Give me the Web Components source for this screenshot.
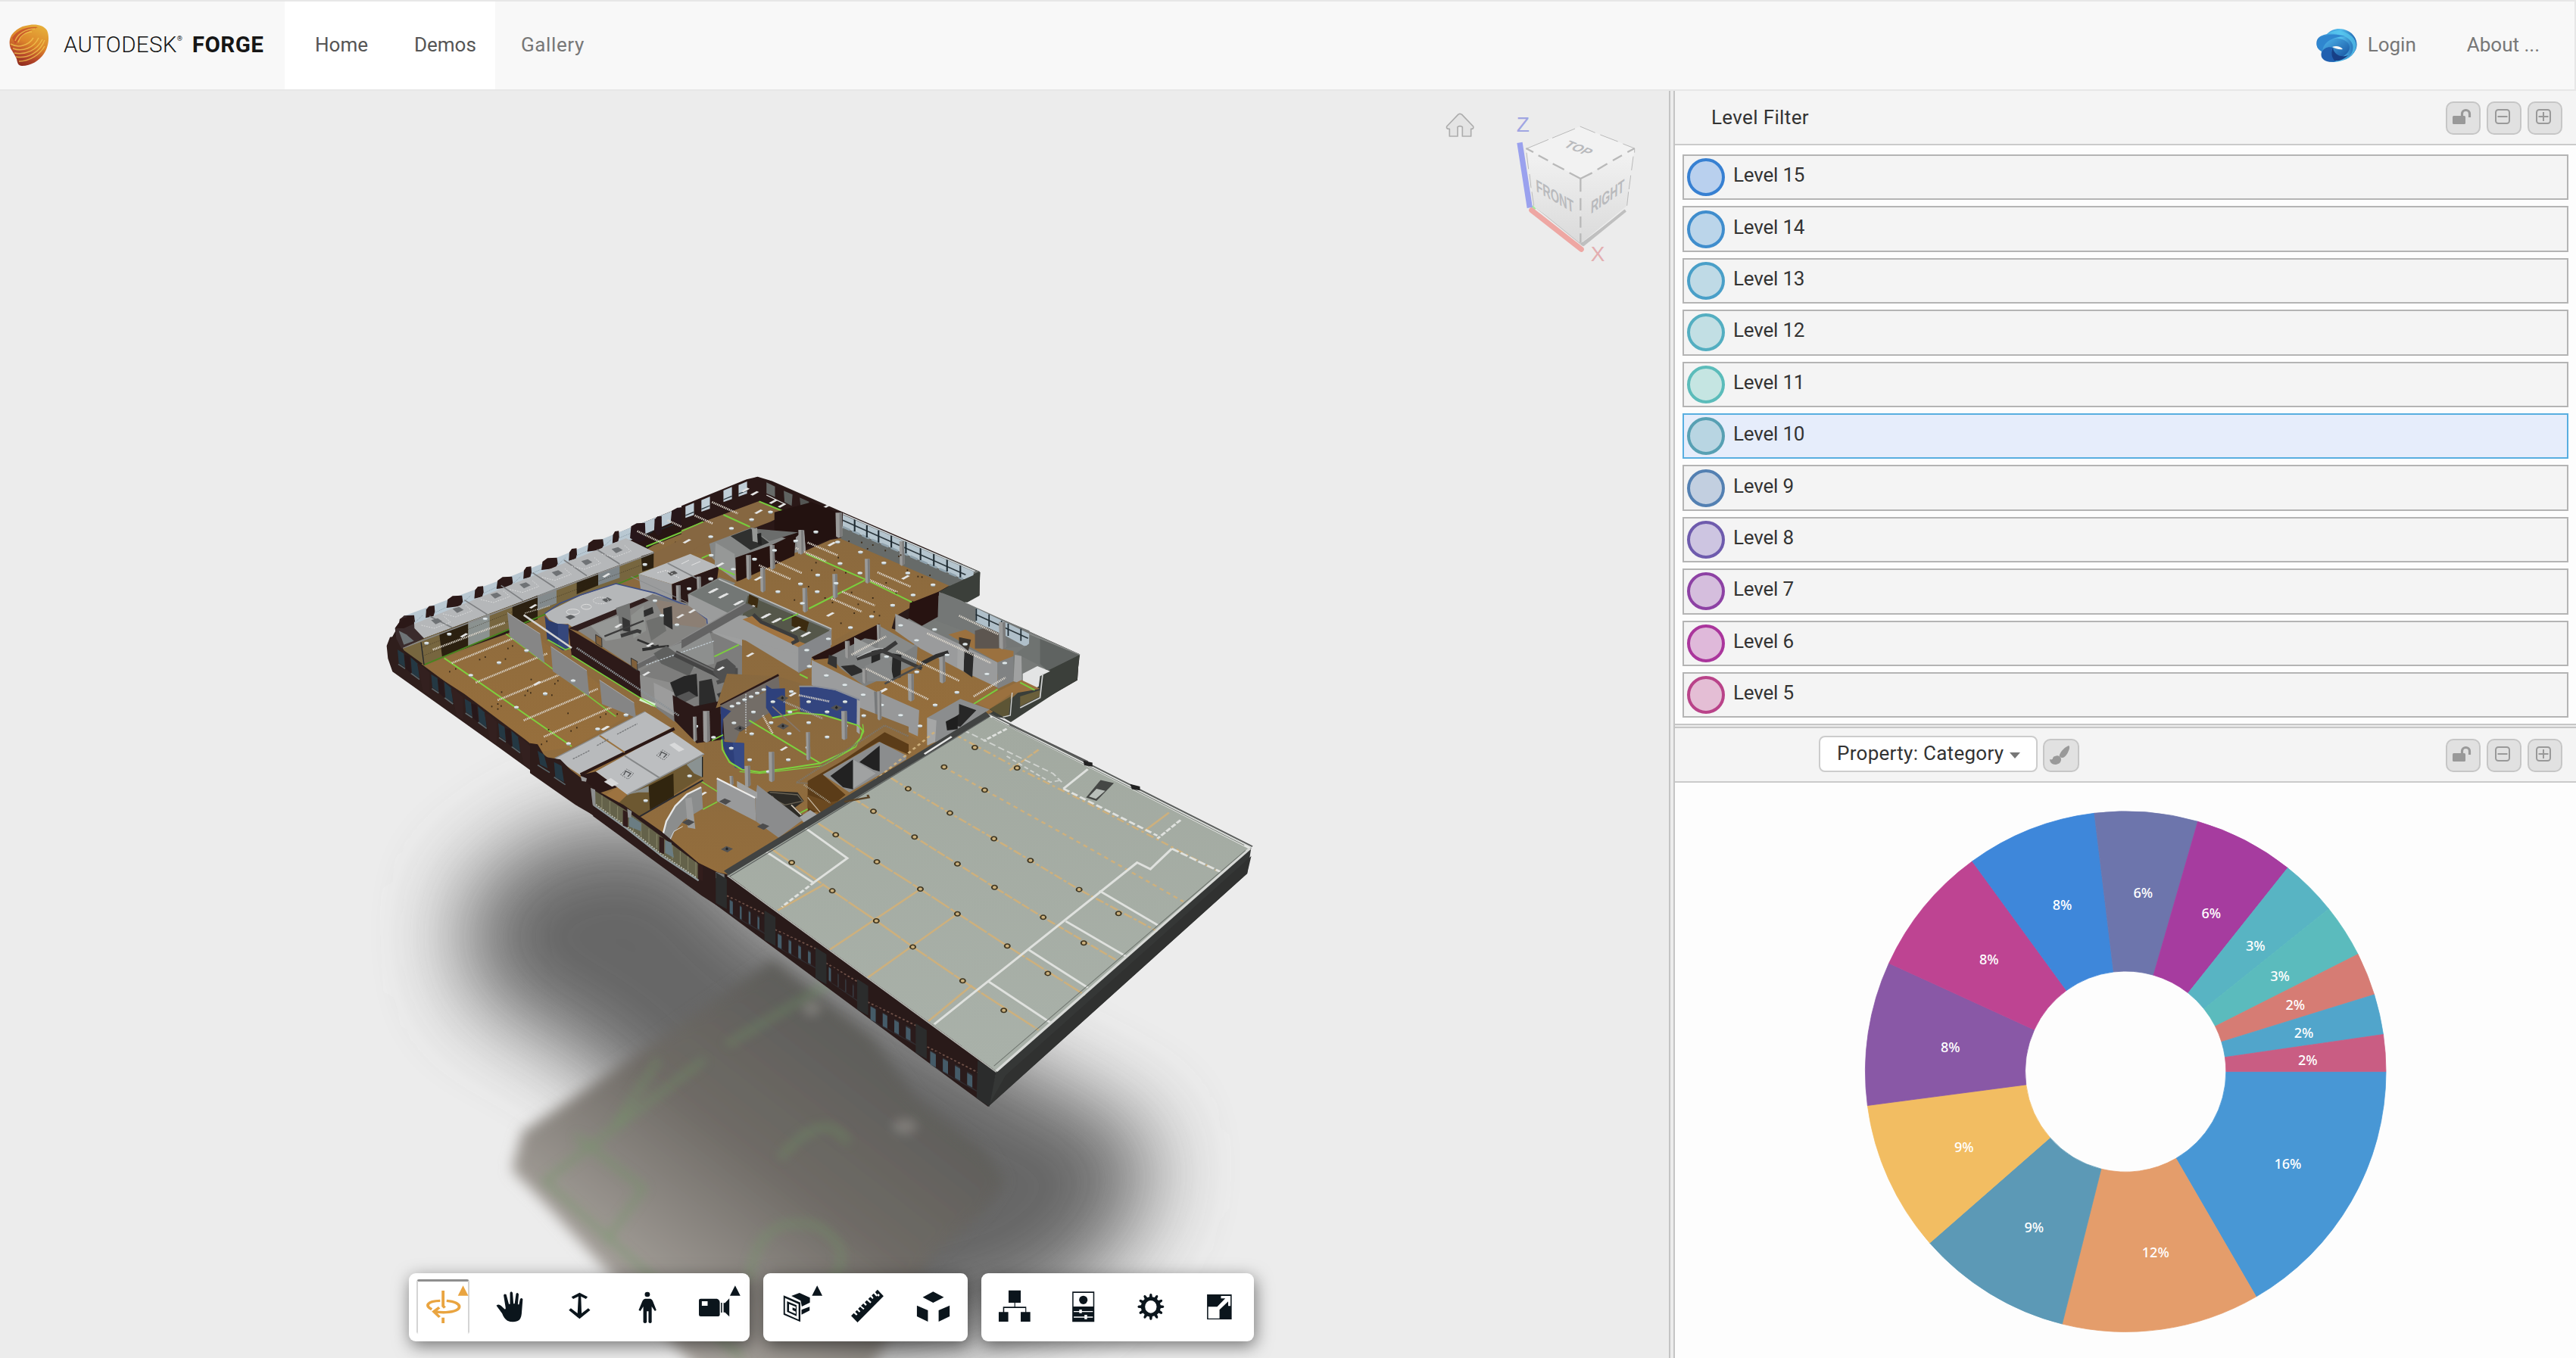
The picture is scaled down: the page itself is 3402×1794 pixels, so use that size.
<!DOCTYPE html>
<html lang="en">
<head>
<meta charset="utf-8">
<title>Autodesk Forge</title>
<style>
html,body{margin:0;height:100%;overflow:hidden}
body{font-family:Roboto,"Liberation Sans",sans-serif;font-size:26px;color:#333;background:#fdfdfd}
</style>
</head>
<body>
<forge-app></forge-app>
<script>
const define=(name,html,init)=>customElements.define(name,class extends HTMLElement{
  connectedCallback(){
    if(this.shadowRoot)return;
    const t=document.createElement('template');
    t.innerHTML=typeof html==='function'?html(this):html;
    this.attachShadow({mode:'open'}).appendChild(t.content.cloneNode(true));
    if(init)init(this);
  }
});

/* ---------- drawing helpers ---------- */
const P=(pts,fill,x='')=>`<polygon points="${pts}" fill="${fill}" ${x}/>`;
const L=(pts,stroke,w=3,dash='')=>`<polyline points="${pts}" fill="none" stroke="${stroke}" stroke-width="${w}" ${dash?`stroke-dasharray="${dash}"`:''}/>`;
const G=(tx,ty,sx,sy,body)=>`<g transform="translate(${tx} ${ty}) scale(${sx} ${sy})">${body}</g>`;
const dots=(list,fill='#dfe6e8',rx=9,ry=6)=>list.map(([x,y])=>`<ellipse cx="${x}" cy="${y+2}" rx="${rx}" ry="${ry}" fill="#8d9698"/><ellipse cx="${x}" cy="${y}" rx="${rx}" ry="${ry-1.5}" fill="${fill}"/>`).join('');
const slabs=(list)=>list.map(([x,y])=>P(`${x-16},${y+5} ${x+8},${y-9} ${x+17},${y-5} ${x-7},${y+9}`,'#e4e5e5')).join('');
const specks=(list)=>list.map(([x,y])=>`<rect x="${x-2}" y="${y-3}" width="5" height="6" fill="#3a2a18"/>`).join('');
const track=(a,b,c,d,col='#dcd6cc')=>L(`${a},${b} ${c},${d}`,col,8,'4 3');
const post=(x,y,h=90,w=18)=>P(`${x},${y} ${x+w},${y} ${x+w+2},${y+h-8} ${x+w/2},${y+h} ${x+2},${y+h-6}`,'#9a9a99')+P(`${x+w*.6},${y} ${x+w},${y} ${x+w+2},${y+h-8} ${x+w*.65},${y+h}`,'#7b7b7b');

/* ---------- 3D model ---------- */
function shell(){
  let s='';
  s+=P('60,395 460,170 600,94 680,52 705,62 830,135 1063,270 1063,325 1030,345 1110,385 1235,460 1232,520 1115,610 1078,600 620,1037 608,1037 50,495 42,440','#2a1b19');
  s+=P('100,483 250,412 500,210 690,108 1010,300 890,395 1180,540 1078,600 630,968 570,950','url(#floor)');
  /* back right walls */
  s+=P('820,135 1063,270 1063,290 1010,300 820,190','#6d716e');
  s+=P('1010,300 1063,270 1063,325 990,372','#3c403b');
  s+=P('1000,318 1235,460 1170,500 1150,540 920,400','#777a78');
  s+=P('1170,500 1235,460 1232,520 1115,610 1078,600 1120,560','#3a3e39');
  return s;
}
function leftWing(){
  let s='';
  /* glazed north-west facade */
  s+=P('125,690 165,640 600,478 1060,290 1500,115 1500,190 1130,350 1045,340 170,700 150,745','#b9c8d2');
  s+=P('1050,345 1500,150 1500,215 1120,368','#271513');
  for(const [x,y,k] of [[172,662,1.1],[265,624,.62],[362,584,1.1],[458,547,.62],[560,509,1.1],[650,469,.55],[738,434,1.1],[830,397,.55],[920,361,1.1],[1000,328,.45]])
    s+=P(`${x-30*k},${y+25} ${x-26*k},${y-8} ${x-8*k},${y-22} ${x+26*k},${y-24} ${x+29*k},${y} ${x+20*k},${y+18}`,'#2b1817')+L(`${x+30*k},${y+4} ${x+96-30*k},${y-24}`,'#6f8592',2,'3 3');
  for(const [x,y,k] of [[1087,302,1.1],[1167,275,.55],[1248,240,1.1],[1325,212,.55],[1402,182,1.05],[1475,150,.55]]){
    s+=P(`${x-28*k},${y+30} ${x-24*k},${y-16} ${x-4*k},${y-28} ${x+26*k},${y-30} ${x+28*k},${y+36} ${x},${y+50}`,'#27161a');
    s+=L(`${x+24*k},${y+22} ${x+60},${y+4}`,'#1e2b33',4);
  }
  /* ceilings of the office row */
  s+=P('158,690 1040,333 1152,388 240,730','#b5b7b9');
  for(const [a,b,c,d] of [[262,642,352,688],[400,578,490,635],[545,520,632,580],[670,470,758,528],[795,420,885,482],[925,378,1015,435]]) s+=L(`${a},${b} ${c},${d}`,'#7c7e80',5);
  for(const [x,y] of [[290,662],[375,617],[525,560],[640,520],[768,472],[885,428],[1005,380]])
    s+=P(`${x-22},${y-4} ${x+4},${y-12} ${x+22},${y} ${x-4},${y+12}`,'#6f7275')+L(`${x-60},${y+16} ${x-10},${y+28} ${x+55},${y+4} ${x+30},${y-18}`,'#dcdddd',3,'5 5');
  /* glass front of the office row */
  s+=P('150,770 240,730 1152,388 1150,450 240,835','#77663f');
  [['300,710 415,665 415,765 312,805','#2b2010'],['415,665 500,632 500,725 415,760','#8b9290'],['590,600 690,560 690,655 590,690','#2b2010'],['690,560 765,530 765,590 690,620','#838a8c'],['845,505 930,470 930,520 845,555','#2b2010'],['930,470 1015,440 1015,490 930,520','#7e868a'],['1100,405 1152,388 1150,450 1105,465','#2b2010']].forEach(([p,c])=>s+=P(p,c));
  s+=L('150,770 1152,390','#8a8a8a',5)+L('235,800 700,610','#30281a',2,'3 5')+L('235,765 640,605','#30281a',2,'3 5')+L('700,590 1100,440','#30281a',2,'3 5');
  s+=L('240,835 1150,455','#49851f',6)+L('228,745 240,835','#22252a',4);
  /* open floor */
  s+=P('245,838 575,712 640,690 1080,1020 830,1160 700,1180','url(#floor)');
  s+=L('320,808 825,1158','#7ed03d',6)+L('565,712 1000,1040','#78c83d',5);
  [[275,775,560,668],[350,828,630,715],[445,905,728,790],[532,975,815,858],[635,1055,928,930],[715,1120,1012,990]].forEach(a=>s+=track(...a));
  s+=P('570,628 700,712 718,828 580,722','#868686')+P('742,762 885,858 895,960 750,860','#858585')+P('935,895 1072,985 1080,1045 945,990','#858585');
  s+=L('570,628 700,712','#a9a9a9',3)+L('742,762 885,858','#a9a9a9',3)+L('935,895 1072,985','#a9a9a9',3);
  s+=dots([[250,748],[340,712],[482,652],[537,825],[425,875],[646,777],[720,948],[606,1002],[830,897],[1040,1033],[813,1146],[928,1088],[1115,436],[1248,382],[1376,326],[1458,293]]);
  s+=slabs([[398,718],[672,603],[688,908],[962,480],[1280,347],[960,1085]]);
  s+=specks([[341,862],[365,851],[460,814],[482,804],[562,812],[572,770],[590,760],[664,893],[650,938],[662,946],[640,956],[547,943],[532,990],[545,998],[508,1000],[532,1010],[758,910],[770,898],[746,955],[810,1027],[938,1042],[960,1030],[1005,1030],[845,1084],[822,1097],[733,1092],[726,1138],[705,1150],[1180,385],[1236,350],[1215,380],[1355,303],[1430,272],[1152,415]]);
  /* upper-right strip of the wing */
  s+=P('1150,392 1500,215 1500,330 1365,390 1300,395 1150,460','#866741');
  s+=L('1120,366 1320,285 1368,262','#75c83a',6)+L('1425,240 1500,272','#75c83a',6)+L('1340,412 1372,398','#75c83a',6);
  [[1085,305,1190,355],[1205,262,1305,308],[1310,240,1385,275],[1380,188,1485,235]].forEach(a=>s+=track(...a));
  /* white block */
  s+=P('1090,475 1295,395 1408,445 1222,515','#b8babc')+P('1090,475 1222,515 1225,590 1098,535','#9b9c9d')+P('1222,515 1408,445 1400,505 1290,590 1225,590','#2a1817')+L('1205,432 1320,492','#818385',5);
  s+=P('1205,470 1232,462 1245,472 1218,482','#555')+L('1165,470 1200,460 1250,490','#e2e2e2',4,'5 5')+L('1260,435 1290,420','#e2e2e2',3)+L('1300,440 1335,425','#e2e2e2',3);
  s+=post(1238,520,80,18)+post(1320,485,60,16)+dots([[1290,532],[1376,493],[1380,400],[1465,455]]);
  return s;
}
function core(){
  let s='';
  /* corridor & mixed grey rooms */
  s+=P('1100,545 1285,590 1390,650 1500,640 1500,1000 1430,1000 1230,1060 1100,960 1080,830 840,690','#7d7d7c');
  s+=P('1285,555 1410,488 1500,520 1500,660 1400,650','#7f827e')+P('1285,555 1500,690 1500,760 1365,700 1290,610','#9e9f9f');
  s+=slabs([[1388,540],[1425,558],[1490,588]]);
  /* curved room */
  s+=P('718,630 860,560 1000,513 1155,550 845,700 810,672 770,675 735,655','#b5b7b9')+P('718,640 735,660 770,672 812,676 812,775 790,778 728,735','#2c3d6f')+P('770,672 812,676 812,775 772,765','#35477c');
  s+=L('718,632 780,590 860,558 1000,513 1155,550','#3d4e86',5)+L('1155,550 1280,600 1360,655 1365,705','#3f508a',5);
  for(const [x,y] of [[820,645],[965,577]]) s+=P(`${x-20},${y} ${x+2},${y-10} ${x+20},${y} ${x-2},${y+11}`,'#5a5c5e');
  s+=`<ellipse cx="830" cy="625" rx="26" ry="11" fill="none" stroke="#dedede" stroke-width="3"/><ellipse cx="883" cy="605" rx="20" ry="10" fill="none" stroke="#dedede" stroke-width="3"/><ellipse cx="940" cy="580" rx="30" ry="13" fill="none" stroke="#dedede" stroke-width="3" stroke-dasharray="6 4"/>`;
  s+=L('730,735 800,775 820,768','#79d03c',5);
  /* brown long wall */
  s+=P('812,690 1095,860 1100,968 825,800','#2d1a19')+P('812,690 1110,570 1130,580 850,702','#301e1d');
  s+=P('850,700 1150,575 1290,600 1370,680 1220,790 1095,860','#858583')+P('1150,575 1290,600 1358,655 1355,690 1200,670','#8c7f74');
  s+=P('1000,610 1055,590 1060,680 1015,700','#737473')+P('900,680 1010,640 1020,730 960,740','#969896')+P('1060,640 1110,600 1120,700 1070,730','#8f918e')+P('1120,660 1185,640 1200,700 1140,740','#6f706e');
  s+=P('1188,612 1222,602 1225,695 1190,675','#2b2b2b')+P('1025,645 1055,660 1058,705 1028,700','#353535')+P('1110,620 1145,605 1150,630 1112,645','#2e2e2e');
  s+=L('955,722 1110,660','#3b3b3b',7)+L('1020,720 1085,700 1100,705','#3a3a3a',14)+L('1085,735 1160,765 1210,760','#303030',8)+L('1105,775 1140,770 1170,760','#2f2f2f',12);
  s+=P('920,715 944,730 945,765 921,750','#80603b','stroke="#333" stroke-width="3"')+P('1060,808 1085,822 1086,858 1062,842','#80603b','stroke="#333" stroke-width="3"');
  /* long duct */
  s+=P('1085,830 1500,620 1500,655 1330,730 1090,850','#676767')+L('1085,830 1500,618','#8b8b8b',4);
  s+=P('1200,770 1370,700 1385,750 1390,830 1300,850','#8d8f8e')+P('1150,790 1200,760 1310,840 1290,880 1180,830','#5e5f5e')+L('1120,835 1390,740','#c0cad0',4,'8 4');
  s+=L('1235,790 1390,865 1495,930','#444',26)+L('1235,785 1390,858 1495,920','#6a6a6a',6);
  s+=L('1390,870 1450,850 1475,855 1475,880 1400,905','#4c4c4c',16)+P('1385,865 1400,825 1440,810 1475,840 1470,880 1420,905','#505050');
  s+=slabs([[1120,870],[1415,850],[1010,680],[1135,755],[1255,642],[1302,622]]);
  s+=dots([[1182,638],[1155,580],[1242,675]]);
  s+=P('1095,875 1215,905 1225,960 1140,1000 1100,960','#8d8d8c')+P('1150,905 1230,945 1235,1040 1155,995','#9c9c9c');
  s+=P('1215,905 1270,880 1320,870 1325,960 1240,970','#262626')+P('1240,960 1290,940 1320,960 1270,985','#555')+P('1330,900 1380,890 1400,990 1330,1010','#2c2c2c')+P('1400,950 1450,930 1480,960 1420,985','#3b3b3b');
  s+=P('1225,955 1310,1000 1500,960 1420,1000 1425,1105 1320,1145 1232,1055','#2b1918');
  s+=L('1095,970 1155,995','#d6f2cc',14)+L('825,798 1100,968','#78cf3d',5)+L('1100,968 1160,1002','#86d750',4);
  s+=L('635,637 825,768','#d3d3d1',8)+L('640,630 740,600','#b9b4a8',5,'4 3')+L('845,768 1250,1036','#8c9296',8,'5 3');
  s+=L('1060,485 1380,632','#8b8e90',3);
  return s;
}
function eastWing(){
  let s='';
  /* top corner */
  s+=P('0,205 245,100 285,90 330,108 590,228 610,235 600,345 470,395 250,330 100,340 0,300','#2a1817');
  s+=P('0,300 290,187 400,235 330,270 180,330 100,350 0,400','#866741');
  for(const [x,y] of [[15,215],[75,190],[158,152],[215,130]]) s+=P(`${x},${y-8} ${x+32},${y-22} ${x+32},${y+26} ${x},${y+38}`,'#c0ced7')+L(`${x},${y+28} ${x+32},${y+14}`,'#29353d',4);
  s+=P('320,112 352,128 352,170 320,155','#686b69')+P('385,145 418,160 415,205 388,190','#5f6260')+P('445,172 480,188 480,215 450,225','#545654');
  s+=L('292,187 392,230','#76cb3c',6)+L('158,240 258,288','#76cb3c',6)+L('0,305 82,268','#76cb3c',5);
  s+=L('320,162 390,198','#d7d9d8',4);
  s+=slabs([[275,155],[345,188],[378,203],[240,142],[540,210],[290,228],[20,345]]);
  s+=track(115,190,212,235)+track(50,243,118,275)+track(560,270,610,292);
  s+=dots([[335,228],[264,258],[188,293],[110,326]]);
  /* storage + shafts */
  s+=P('350,230 490,190 590,232 580,330 470,370 350,300','#231210')+P('105,355 265,290 440,350 460,300 468,380 205,450 180,480 115,410','#858786')+P('185,325 260,295 330,350 260,380','#2f302f')+P('265,295 440,310 330,345','#6b6d6c');
  s+=P('128,350 200,395 205,500 125,440','#969897')+P('203,410 340,360 430,315 425,405 340,450 260,490 207,505','#261310')+P('430,330 462,300 468,390 440,400','#999');
  s+=P('265,295 285,292 288,350 268,345','#959795')+P('285,315 300,312 302,360 288,358','#222');
  /* main open office */
  s+=P('205,508 430,400 560,340 600,332 1010,520 880,598 805,640 790,695 640,700 570,740 470,700 180,540','url(#floor)');
  s+=P('607,285 1120,505 1100,530 1010,522 600,335','#676b69')+P('607,240 1100,465 1098,500 1060,495 607,288','#b5c5ce');
  s+=L('607,262 1070,478','#2b363c',5)+L('607,288 1060,495','#8fa2ad',8,'30 10');
  for(const [x,y] of [[652,258],[698,282],[742,302],[790,322],[845,345],[900,372],[950,395],[1000,417],[1050,440]]) s+=L(`${x},${y} ${x},${y+48}`,'#1f2b32',6);
  s+=L('607,236 1105,464','#dde4e8',4);
  s+=L('470,395 700,500 880,593','#7ace3e',6)+L('690,500 480,612','#7ace3e',6)+L('140,450 200,478','#7ace3e',6);
  [[475,350,590,402],[430,372,545,425],[335,415,455,472],[292,440,410,495],[738,468,862,525],[695,492,815,548],[605,545,728,600],[565,572,680,625]].forEach(a=>s+=track(...a));
  [[440,300],[332,360],[243,400],[296,450],[455,530],[568,475],[690,415],[820,345]].forEach(([x,y])=>s+=post(x,y,98));
  s+=post(580,232,100,24);
  s+=dots([[588,347],[674,387],[762,430],[852,470],[947,517],[672,470],[597,432],[513,478],[448,513],[363,544],[511,544],[582,511],[872,557],[795,598],[716,642],[636,686],[455,590],[350,380],[430,343],[506,307],[275,415],[195,455],[112,400],[110,493]]);
  s+=slabs([[565,356],[843,488],[288,493],[560,635],[145,438]]);
  s+=specks([[630,345],[678,350],[720,360],[767,382],[818,405],[700,375],[825,400],[590,410],[506,430],[490,460],[618,470],[575,460],[850,460],[890,485],[935,480],[905,487],[770,510],[808,550],[640,548],[540,570],[478,525],[425,578],[568,588],[720,570],[650,630],[725,625],[745,640],[600,670],[665,595],[870,585]]);
  s+=P('1010,522 1125,467 1120,562 1075,588 970,545','#3b3f3a');
  /* middle glass office with duct */
  s+=P('30,555 140,495 565,692 565,755 440,865 25,600','#9b9c9c')+P('30,555 140,495 565,692 440,765','#737775');
  s+=P('230,640 250,560 540,690 560,700 555,740 480,760 440,765 230,655','#55574a')+P('150,640 240,640 440,760 430,790 100,700','#9b9c9c')+P('230,655 270,640 440,740 500,765 440,765','#a17440')+P('440,765 565,695 560,800 440,868','#85878a');
  s+=P('415,635 480,665 470,705 415,680','#3c2b10')+P('255,555 290,572 285,610 250,590','#3c2b10')+L('140,495 565,692','#b9bbbb',5);
  s+=slabs([[120,540],[158,560],[215,588],[258,608],[318,640],[358,658],[430,692],[468,713]].flatMap(([x,y])=>[[x-5,y+3],[x+4,y-1]]));
  s+=L('270,635 300,665 430,725 435,740 415,750','#3c3c3c',14)+L('380,660 440,632','#77c93f',5)+P('0,735 240,590 275,605 0,770','#636363')+L('0,735 240,590','#8d8d8d',4);
  /* rooms to the right */
  s+=P('490,805 740,672 805,695 1000,800 1190,930 1100,990 1050,970 920,1150 480,880','url(#floor)');
  s+=P('490,805 745,672 745,740 620,800 500,815','#281412')+P('560,800 690,730 870,760 890,740 885,830 690,920 600,850','#7e8080')+P('650,725 745,775 650,800','#999b9a')+P('745,680 880,760 770,830 740,770','#888a89');
  s+=P('600,840 650,835 690,860 640,880','#2c2c2c')+P('555,795 585,805 585,850 550,830','#333')+P('715,780 748,775 748,835 715,830','#272727')+P('795,790 828,795 825,885 790,890','#262626')+P('690,840 780,800 800,900 700,900','#858787');
  s+=P('490,815 740,945 750,1055 680,1010 490,915','#9b9c9d')+P('745,945 895,1015 890,1118 750,1050','#979899')+P('725,940 745,945 750,1055 730,1050','#77797a');
  s+=P('970,545 1105,610 1310,700 1310,760 1200,770 1180,760 1060,700 960,660','#747776')+P('805,632 1190,825 1190,925 1060,860 900,770 805,700','#9a9b9c')+P('1190,825 1250,790 1250,900 1190,930','#808283')+P('860,590 968,545 965,645 905,680 855,650','#271311');
  s+=P('1005,715 1070,695 1200,770 1250,780 1250,800 1190,825','#9b713f')+P('1105,700 1195,672 1195,770 1105,770','#5d5650')+P('1065,780 1100,790 1095,885 1062,860','#2a2a2a')+P('1045,725 1090,735 1080,780 1045,750','#39342e')+P('1040,750 1065,770 1062,860 1038,845','#a3a4a4');
  s+=P('1108,610 1310,712 1308,758 1290,760 1220,720 1108,665','#afbfc9')+L('1108,635 1305,730','#2b363c',5);
  for(const [x,y] of [[1110,612],[1158,635],[1205,660],[1230,672],[1278,692]]) s+=L(`${x},${y} ${x},${y+48}`,'#1f2b32',5);
  s+=P('1310,712 1500,795 1380,855 1260,790 1310,750','#6f7371')+P('1350,730 1500,795 1380,860 1350,830','#5f6361')+P('1500,795 1488,890 1240,1062 1160,1012 1365,930 1380,857','#3b3f3a');
  s+=L('1310,712 1500,795','#8b8e8c',4);
  s+=P('1255,795 1280,800 1282,910 1250,900','#a0a1a1')+P('1285,870 1340,840 1388,860 1350,880 1345,920 1320,935 1285,900','#e3e4e4');
  s+=P('1105,985 1280,895 1350,930 1240,950 1160,1010','#9b713f')+P('1160,1010 1240,960 1232,1040 1210,1040','#5d5535')+P('1275,960 1350,935 1350,960 1275,1000','#6a5f3b')+L('1275,1005 1350,965 1360,870','#cfd1d1',5)+L('1210,1042 1238,1035 1245,945','#cfd1d1',4);
  s+=L('1100,990 1190,932','#79cc3d',6)+L('1275,905 1330,935','#79cc3d',6);
  s+=post(1195,665,108,24)+post(970,800,108,22)+post(852,870,110,22)+post(615,740,70)+post(680,850,60)+post(735,675,70,14);
  s+=L('660,810 770,775 810,745','#383838',16)+L('745,775 800,800 905,850','#3b3b3b',14)+L('905,830 960,800 1005,785','#2f2f2f',16)+L('765,910 905,835','#4b4b4b',8)+L('660,805 735,770 760,770','#b9bbbb',4);
  [[925,710,1165,828],[810,780,1045,898],[695,850,930,972],[1045,640,1195,715],[640,795,770,722],[1100,960,1220,885]].forEach(a=>s+=track(...a));
  s+=dots([[545,877],[615,914],[684,953],[753,994],[825,1034],[898,1076],[481,840],[472,776],[553,731],[825,678],[885,737],[953,694],[1068,752],[1217,827],[1150,871],[1037,943],[955,993],[886,862],[772,802],[1000,795],[688,1034]]);
  s+=slabs([[258,795],[222,895],[760,937]]);
  /* stair box */
  s+=P('925,1045 1050,970 1160,1012 1050,1090 960,1140 925,1150','#8b8d8e')+P('1045,990 1110,1015 1050,1080 1000,1070 1045,1030','#272727')+P('925,1045 960,1055 955,1140 925,1155','#a5a6a6')+P('995,1060 1040,1035 1040,1090 1000,1095','#1f1f1f');
  return s;
}
function southWing(){
  let s='';
  s+=P('690,400 780,120 980,130 1110,170 1320,260 1500,330 1500,380 1180,560 1080,700 985,770 770,910 400,700 690,540','url(#floor)');
  s+=P('650,285 800,235 860,225 860,290 770,380 660,395','#2a1817')+L('755,245 985,125','#2a1817',9)+P('755,245 985,130 990,190 940,180 850,240 770,290 755,280','#706a66');
  /* oval meeting room */
  s+=P('755,250 800,270 765,300 762,350 770,390 848,395 848,500 812,490 775,440 758,380','#2d3f7a')+P('765,300 800,265 940,185 955,190 955,270 830,350 812,395 770,380','#736d67');
  s+=P('935,165 958,180 1010,178 1012,285 960,292 935,255','#2e417c')+P('1068,170 1130,172 1210,185 1305,222 1300,325 1200,290 1070,270','#33457f')+L('1066,170 1130,170 1210,183 1305,222','#8b8f99',6);
  s+=P('1295,222 1308,228 1306,360 1294,350','#a2a3a4')+P('803,392 848,395 848,500 812,492','#364a86');
  s+=L('960,295 1060,275 1160,283 1300,325 1318,345 1310,375 1270,420 1150,475 1040,492 910,510 840,500 790,470 762,420 760,380','#7cd23e',6)+L('1318,320 1322,350 1290,410 1160,485 1040,500 910,515 830,508','#7cd23e',4);
  s+=L('868,305 1150,475','#7cd23e',6)+L('1015,268 1060,262','#7cd23e',5)+L('720,385 765,362','#7cd23e',5);
  s+=track(1065,205,1185,230)+track(1005,230,1160,298,'#a9a49c')+track(922,285,962,358)+L('960,250 1070,350','#87786a',5)+L('855,200 855,360','#c6ccd0',4,'6 4');
  s+=dots([[926,182],[900,196],[876,210],[850,222],[825,236],[800,248],[885,271],[808,314],[955,313],[1030,271],[1104,313],[1177,270],[1104,230],[1248,230],[1035,190],[962,230],[1027,356],[878,357],[797,414],[870,460],[1023,460],[1177,370],[1100,412],[944,507],[1322,285],[1250,326],[1393,244],[1320,203],[1247,164],[1174,127],[1468,284],[1107,90],[1096,26],[657,327],[727,371]]);
  for(const [x,y] of [[1000,217],[832,337],[1002,328],[1214,255],[773,626],[627,709],[924,725],[780,815]]) s+=P(`${x-24},${y+1} ${x-2},${y-12} ${x+24},${y-1} ${x+2},${y+13}`,'#525253')+P(`${x-6},${y} ${x},${y-8} ${x+6},${y} ${x},${y+5}`,'#222');
  s+=slabs([[1040,202],[1005,417],[612,547],[685,596],[296,336],[1400,185]]);
  s+=post(945,430,120,22)+post(850,485,85,22)+post(1233,268,115,22)+post(1093,352,112,16)+post(645,290,100,14)+post(685,268,125,26)+post(790,525,40,14);
  s+=post(1375,190,115,16);
  /* stair wells */
  s+=L('1180,560 1055,552 1405,325 1500,368','#7d7568',7,'5 3')+P('1100,545 1230,470 1405,352 1500,400 1500,440 1380,390 1160,520 1250,600 1200,640 1100,680','#5b3c18')+P('1160,520 1385,390 1492,445 1490,460 1265,590','#8b8d8e')+P('1190,525 1280,460 1280,578 1240,570','#222')+P('1305,470 1385,405 1385,508 1360,500','#222')+P('1280,460 1370,515 1280,575','#a0a2a2');
  s+=P('1100,600 1190,630 1230,620 1150,675 1100,650','#6b4920')+L('1085,560 1190,632','#a39985',7,'4 3')+L('1100,610 1150,670','#c6b7a0',4);
  s+=P('920,600 950,585 1060,590 1085,625 1050,650 1090,690 1070,700 985,650','#2d2b26')+L('950,590 1060,600 1080,625 1010,640 970,620 960,605','#6c6556',4)+L('1035,640 1075,680','#d0c5b5',5)+L('1070,672 1100,656','#77cd3d',5)+P('1065,690 1110,660 1140,680 1090,715','#a2a4a5');
  /* curved partition and wall */
  s+=P('525,760 540,700 575,640 620,600 680,570 685,655 610,700 570,750 550,800','#8b8d8d')+L('527,755 540,705 575,645 622,598 678,570','#e6e7e7',7)+L('548,790 570,745 605,725','#d7d8d8',3);
  s+=P('615,615 640,610 655,735 625,730','#9c9d9d')+P('603,709 627,697 652,708 629,722','#4a4a4b');
  s+=P('740,535 892,612 895,705 740,625','#999a9b')+P('892,612 900,560 1080,700 985,770 895,705','#8b8c8d')+P('820,545 900,590 900,615 820,570','#a0a1a1')+L('740,535 892,612','#ececec',7);
  s+=L('675,545 742,587','#7ccd3e',5)+L('685,658 742,628','#7ccd3e',5)+L('1068,122 1100,138','#7ccd3e',6)+L('730,52 828,5','#7ccd3e',6);
  s+=P('749,626 771,614 797,625 775,639','#4c4c4d')+P('900,726 922,713 948,724 926,739','#4c4c4d');
  /* lower office block */
  s+=P('98,455 455,270 560,335 200,522','#b8babc')+P('260,508 555,345 690,438 385,600','#bcbec0')+P('200,522 260,508 345,570 255,600 210,545','#2a1817')+L('200,520 572,338','#2b1815',12);
  s+=L('275,365 375,432','#9a7340',6)+L('375,445 512,532','#868889',6)+L('98,455 455,270','#8b8d8e',4);
  s+=P('300,600 345,570 385,600 345,635','#9d7340')+P('385,600 683,440 683,530 410,700 345,640','#6d5831')+P('470,565 568,515 570,605 475,660','#31250f')+P('620,480 683,445 683,530 650,515','#8a9292')+P('390,598 470,565 470,590 430,590','#8a8f8d')+L('410,700 685,542','#2b2b30',6)+L('683,450 683,530','#1c2328',4)+L('385,600 690,438','#8d9092',5);
  for(const [x,y] of [[385,518],[527,442]]) s+=P(`${x-26},${y+2} ${x-2},${y-20} ${x+26},${y-2} ${x+4},${y+20}`,'none','stroke="#6a6c6e" stroke-width="3" stroke-dasharray="6 4"')+L(`${x-14},${y+4} ${x-6},${y-12} ${x+14},${y-2} ${x+2},${y+10}`,'#4f5153',4);
  s+=P('293,548 320,533 352,556 325,568','#d8d9da')+P('552,402 572,393 612,420 590,430','#d8d9da')+L('170,458 235,425','#77797b',4,'8 3')+L('345,360 425,318','#77797b',4,'8 3')+L('265,405 310,380','#77797b',4,'8 3');
  s+=dots([[632,524],[458,622],[152,396],[268,338],[60,198],[171,147],[380,282]]);
  return s;
}
function southFacade(){
  let s='';
  s+=P('0,395 30,400 60,450 120,460 160,500 250,570 250,680 180,640 0,514','#2d1c1a');
  s+=P('30,425 55,440 70,495 40,480','#243843')+P('95,470 125,485 135,550 100,530','#243843')+L('30,482 78,512','#59666b',5)+L('95,530 140,560','#59666b',5);
  s+=P('250,575 370,640 520,745 668,870 740,905 740,1038 680,1000 250,685','#2c1b1a');
  s+=P('250,580 370,655 520,765 668,875 668,940 520,845 380,735 252,640','#64624a')+L('252,640 385,735 520,842 668,940','#8f999c',7)+L('252,632 385,727 520,834 660,928','#c9cac2',4,'6 5');
  for(let i=0;i<13;i++){const x=285+i*31,y=602+i*22;s+=L(`${x},${y} ${x},${y+55}`,'#8a886a',3);}
  s+=P('392,680 440,712 440,745 392,725','#6b7d83')+P('535,780 560,790 570,850 535,830','#6b7d83')+P('240,572 258,580 260,650 248,640','#8d8f90');
  for(const [x,y] of [[368,660],[512,765],[665,872]]) s+=P(`${x},${y} ${x+20},${y+8} ${x+20},${y+70} ${x},${y+62}`,'#321d1c');
  s+=P('385,655 403,665 400,690 388,690','#8d8f90')+P('200,525 225,535 222,548 205,545','#9b9b9b');
  s+=P('735,910 775,925 778,1058 742,1040','#2b2b2b')+P('735,905 770,915 770,935 735,930','#7b7c7c');
  return s;
}
function leftFacade(){
  let s=P('92,760 105,725 135,720 165,790 260,860 400,950 500,1025 640,1130 720,1195 940,1370 940,1450 760,1325 660,1252 540,1165 115,862 97,810','#2f1e1c');
  for(let i=0;i<4;i++){
    const x=i*133,y=i*97;
    s+=P(`${135+x},${775+y} ${160+x},${790+y} ${165+x},${845+y} ${140+x},${828+y}`,'#243843');
    s+=P(`${187+x},${805+y} ${215+x},${830+y} ${222+x},${888+y} ${192+x},${868+y}`,'#243843');
    s+=L(`${138+x},${832+y} ${165+x},${850+y}`,'#59666b',5)+L(`${188+x},${868+y} ${222+x},${893+y}`,'#59666b',5);
    s+=P(`${213+x},${832+y} ${232+x},${838+y} ${262+x},${866+y} ${262+x},${955+y} ${236+x},${940+y}`,'#33201f');
    s+=P(`${162+x},${795+y} ${182+x},${800+y} ${190+x},${870+y} ${168+x},${850+y}`,'#27181a');
  }
  s+=P('125,690 160,640 200,655 202,690 240,730 150,770 130,730','#3a2b2c')+P('140,700 170,715 200,740 160,755','#6e7477')+P('125,690 155,650 195,640 200,672 160,690','#2b1817');
  return s;
}
function roof(){
  let s='';
  s+=P('628,968 1092,1420 1078,1502 608,1037','#291a19')+P('1092,1420 1532,905 1525,965 1078,1502','#353736')+P('1108,1430 1532,925 1525,965 1078,1502','#303130');
  /* glazing below the slab */
  const a=[[632,1020],[715,1098],[803,1175],[875,1265],[978,1368]];
  const b=[[693,1105],[782,1185],[855,1262],[955,1362],[1062,1470]];
  a.forEach(([x,y],i)=>{const [u,v]=b[i];
    s+=P(`${x},${y+4} ${u},${v-34} ${u},${v} ${x},${y+38}`,'#43586550')+P(`${x},${y+6} ${u},${v-30} ${u},${v-4} ${x},${y+36}`,'#455b68');
    s+=L(`${x-5},${y-4} ${u},${v-46}`,'#6f5148',3,'4 4');
    for(let k=0;k<4;k++){const t=(k+.75)/4,px=x+(u-x)*t,py=y+(v-40-y)*t;s+=P(`${px-6},${py-6} ${px+6},${py+4} ${px+6},${py+42} ${px-6},${py+32}`,'#2a1b1b');}
  });
  for(const [x,y,h] of [[608,962,85],[692,1050,82],[780,1135,85],[852,1208,84],[953,1310,82]]) s+=P(`${x},${y} ${x+19},${y+16} ${x+19},${y+h} ${x},${y+h-14}`,'#2b2c2c');
  s+=P('1060,1395 1092,1420 1080,1502 1058,1482','#2b2c2c');
  s+=P('628,968 1078,598 1532,905 1092,1420','url(#roof)');
  const o='#cdb07d';
  [['1020,645 1128,722 1260,810 1475,960','14 6 5 6'],['1002,720 1072,773 1250,905 1415,1030','8 7'],['910,745 940,770 1012,826 1088,885 1151,935 1235,1002 1370,1098','16 4 6 4'],['845,792 951,881 1025,943 1089,997 1173,1066 1300,1165','16 3'],['785,850 886,938 961,1001 1111,1132 1245,1245','40 3'],['700,905 809,1005 885,1074 948,1134 1034,1212 1165,1325','60 2'],['795,990 715,1050',''],['961,1001 805,1140',''],['1025,1058 870,1205',''],['1050,1222 975,1305',''],['1165,680 1115,728','12 3'],['1390,825 1348,867',''],['985,640 860,775','6 6']].forEach(([p,d])=>s+=L(p,o,4,d));
  const w='#dfe1de';
  [['762,860 835,930 778,985',''],['695,915 778,988',''],['778,985 722,1042','9 4'],['985,1312 1335,940 1358,955 1395,908',''],['1395,908 1480,962','14 4'],['1078,1213 1185,1308',''],['1147,1140 1250,1228',''],['1212,1075 1315,1155',''],['1270,1005 1372,1085',''],['1410,842 1370,885','10 3'],['1110,632 1070,660','8 3'],['1250,725 1208,770',''],['1208,770 1370,878','12 5']].forEach(([p,d])=>s+=L(p,w,4.5,d));
  s+=L('1035,635 1120,690 1190,735 1205,755','#cfd2ce',3,'12 6')+L('1110,695 1185,755 1205,750','#cfd2ce',3,'8 5');
  s+=L('1078,600 1530,907','#e4e6e3',5)+L('1115,622 1250,708','#555',4)+L('1080,597 1534,903','#5b5e5c',3)+L('1530,907 1092,1420','#d7d9d6',5)+L('1522,912 1088,1408','#6c726c',1.5)+L('1085,606 1520,900','#7b817b',1.5);
  s+=L('628,970 1092,1422','#b4b7b2',2.5)+L('626,964 1078,598','#414342',13)+L('632,972 1078,606','#5f6361',2);
  [[1055,675],[1128,722],[1002,720],[1072,773],[940,770],[1012,826],[880,822],[951,881],[1088,885],[1151,935],[815,876],[886,938],[1025,943],[739,940],[809,1005],[961,1001],[1089,997],[1235,1002],[1303,1057],[885,1074],[1025,1058],[1173,1066],[1243,1125],[948,1134],[1111,1132],[1181,1195],[1034,1212],[1105,1280]].forEach(([x,y])=>s+=`<ellipse cx="${x}" cy="${y}" rx="4.6" ry="4.8" fill="#cbb07c" stroke="#403722" stroke-width="2.6"/>`);
  s+=P('1247,790 1272,750 1295,757 1265,798','#454745')+P('1252,788 1265,770 1280,775 1264,793','#b9bfba')+P('1242,705 1258,710 1258,719 1244,716','#222')+P('1323,759 1340,765 1340,774 1326,771','#222');
  s+=L('968,690 1015,650','#e3e4e3',4)+L('830,800 872,790 870,784','#5a4428',4);
  return s;
}
function ground(){
  return `<defs>
  <filter id="b60" x="-60%" y="-60%" width="220%" height="220%"><feGaussianBlur stdDeviation="58"/></filter>
  <filter id="b12" x="-20%" y="-20%" width="140%" height="140%"><feGaussianBlur stdDeviation="9"/></filter>
  <filter id="b6" x="-30%" y="-30%" width="160%" height="160%"><feGaussianBlur stdDeviation="7"/></filter>
  <linearGradient id="floor" gradientUnits="userSpaceOnUse" x1="0" y1="0" x2="0" y2="1200"><stop offset="0" stop-color="#87683f"/><stop offset="1" stop-color="#976f3c"/></linearGradient>
  <linearGradient id="roof" x1="0" y1="0" x2="0" y2="1"><stop offset="0" stop-color="#a2a9a0"/><stop offset="1" stop-color="#a9b1a9"/></linearGradient>
  <linearGradient id="refl" gradientUnits="userSpaceOnUse" x1="1120" y1="1290" x2="800" y2="1700"><stop offset="0" stop-color="#5a5a57"/><stop offset=".5" stop-color="#6f6b66"/><stop offset="1" stop-color="#a8a39d"/></linearGradient>
  <linearGradient id="cube" x1="0" y1="0" x2="0" y2="1"><stop offset="0" stop-color="#f3f3f3"/><stop offset="1" stop-color="#dadada"/></linearGradient>
  </defs>
  <polygon points="610,1180 740,1090 900,1090 1010,1210 1330,1400 1520,1500 1510,1600 1400,1720 1130,1800 980,1600 780,1400 620,1310" fill="#626262" opacity=".97" filter="url(#b60)"/>
  <g filter="url(#b12)"><polygon points="1020,1268 1150,1370 1210,1450 1300,1520 1328,1560 1300,1600 1230,1660 1150,1810 940,1830 720,1590 676,1545 690,1495 860,1380" fill="url(#refl)"/></g>
  <g filter="url(#b6)" fill="none" stroke="#6f9a63" stroke-width="7" opacity=".5"><path d="M930 1400 720 1560 980 1794M760 1500 850 1570 800 1640M990 1690q10-90 90-70q50 30 20 70l-60 30M1110 1290 960 1380M870 1400l-60 90M1030 1530q60-70 90-20"/></g>
  <g filter="url(#b6)" fill="#aaa7a2" opacity=".4"><ellipse cx="1072" cy="1332" rx="12" ry="10"/><ellipse cx="1195" cy="1488" rx="16" ry="10"/></g>`;
}
function cube(){
  return `<g fill="#e4e4e4" stroke="#adadad" stroke-width="5" stroke-linejoin="round"><path d="M204 91 L212 94 257 141 Q260 152 248 151 V180 H214 V143 Q204 137 195 143 V180 H163 V151 Q149 152 152 141 L197 94Z"/></g>
  <polygon points="497,458 690,600 860,472 858,480 690,615" fill="#bdbdbd"/>
  <polygon points="466,230 680,141 896,228 682,348" fill="#f2f2f2"/>
  <polygon points="466,230 682,348 682,605 497,455" fill="url(#cube)"/><polygon points="682,348 896,228 866,455 682,605" fill="url(#cube)"/>
  <g fill="none" stroke="#b9b9b9" stroke-width="7"><path d="M466 228 495 243M515 256 553 276M572 289 617 312M638 325 682 348M896 228 868 243M846 256 810 276M788 289 749 312M728 325 682 348M682 348V400M682 425V474M682 498V542M682 565V602"/><path d="M466 230 555 193M570 187 660 150M680 141 740 166M760 174 830 201M850 210 896 228V245M891 260 884 315M881 335 874 390M872 400 866 455M468 245 476 310M480 330 486 385M489 400 497 455" stroke-width="3"/></g>
  <path d="M690 612 860 474" stroke="#bfbfbf" stroke-width="12"/>
  <path d="M490 457 502 470" stroke="#a7e89f" stroke-width="10"/>
  <path d="M441 205 481 463" stroke="#9aa1ee" stroke-width="22"/><path d="M488 473 685 628" stroke="#eea7a3" stroke-width="21" stroke-linecap="round"/>
  <g font-family="Liberation Sans,sans-serif" font-weight="700" font-size="70" fill="#b9babd">
  <text transform="matrix(.68 .27 -.58 .48 612 220)">TOP</text><text transform="matrix(.62 .36 .06 1 507 398)">FRONT</text><text transform="matrix(.61 -.42 -.03 1 722 488)">RIGHT</text></g>
  <g font-family="Liberation Sans,sans-serif" font-size="84"><text x="428" y="163" fill="#a0a5e2">Z</text><text x="722" y="675" fill="#e3aeb0">X</text></g>`;
}

/* ---------- elements ---------- */
define('nav-link',`<style>:host{display:flex;align-items:center;padding-bottom:2px;color:#777;white-space:nowrap}:host([active]){color:#555}</style><slot></slot>`);

define('forge-logo',`<style>:host{display:flex;align-items:center;gap:19px;padding-left:12px;width:364px;color:#161616}
svg{display:block}.t{font-size:29.5px;white-space:nowrap;display:flex;padding-bottom:2px}.a{font-weight:300;letter-spacing:.35px}.r{font-size:9px;padding-top:4px;width:20px}.f{font-weight:700;letter-spacing:.5px}</style>
<svg width="53" height="56" viewBox="0 0 53 56"><defs><linearGradient id="g" x1=".7" y1="0" x2=".3" y2="1"><stop offset="0" stop-color="#e6ae3a"/><stop offset=".45" stop-color="#dc852b"/><stop offset=".75" stop-color="#b8492a"/><stop offset="1" stop-color="#8e2c1e"/></linearGradient></defs>
<path d="M22 2C32-1 45 0 50 8c4 9 2 22-4 31C40 48 29 55 17 55c-5 0-6-4-7-9C8 41 5 37 2 32-1 24 1 15 7 10c4-4 9-7 15-8z" fill="url(#g)"/>
<path d="M4 18C12 6 26 3 38 4 26 8 16 16 8 26z" fill="#c3482a" opacity=".75"/>
<g fill="none" stroke="#f3c950" stroke-width="1.5" opacity=".75"><path d="M2 26c10 6 24 2 30-8M5 32c13 5 28-1 34-14M7 38c15 3 30-4 37-18M9 43c15 3 32-6 38-22M13 49c14 0 28-9 34-20"/><path d="M12 24c2-8 10-14 18-14M8 22c3-9 14-16 26-16"/></g></svg>
<div class="t"><span class="a">AUTODESK</span><span class="r">®</span><span class="f">FORGE</span></div>`);

define('forge-navbar',`<style>:host{display:flex;height:116px;border:2px solid #e7e7e7;border-left:0;background:#f8f8f8}
.w{display:flex;background:#fff;width:238px;padding-left:40px;gap:61px}.g{margin-left:34px;letter-spacing:.6px}.r{display:flex;margin-left:auto;padding-right:46px}.l{display:flex;align-items:center;gap:14px;margin-right:67px}svg{display:block}</style>
<forge-logo></forge-logo><div class="w"><nav-link active>Home</nav-link><nav-link active>Demos</nav-link></div><nav-link class="g">Gallery</nav-link>
<div class="r"><div class="l"><svg width="54" height="46" viewBox="0 0 54 46"><defs><linearGradient id="a" x1="0" x2="1"><stop offset="0" stop-color="#2d7dc8"/><stop offset=".6" stop-color="#55c0ee"/><stop offset="1" stop-color="#1e62ae"/></linearGradient><linearGradient id="b" x1="0" x2="1" y1="0" y2="1"><stop offset="0" stop-color="#4fb6ec"/><stop offset="1" stop-color="#14509e"/></linearGradient></defs>
<path d="M14 8C21 0 33-1 42 4c10 5 14 16 10 25C47 40 34 45 22 45 11 44 5 38 7 31 1 28-1 21 1 16c2-5 8-7 13-8z" fill="url(#a)"/>
<path d="M14 8c16-2 30 3 34 14 2 9-3 16-10 20 16-8 19-22 9-31C38 3 24 1 14 8z" fill="#57c7ee" opacity=".75"/>
<path d="M1 20C4 8 24 6 38 11 24 11 12 17 8 30 2 29 0 24 1 20z" fill="#2f86cf"/>
<path d="M10 24c5-9 16-13 27-8 8 4 9 11 4 17-6 7-18 10-28 6-5-3-6-9-3-15z" fill="url(#b)"/><path d="M7 33c2-7 10-9 15-7-3 4-3 10 4 18C16 47 4 42 7 33z" fill="#2160b0"/><path d="M22 26c1 8 9 14 20 10-7 7-14 8-18 7-4-5-5-12-2-17z" fill="#173f86"/>
<path d="M21 25c5-2 11-1 14 3-5 1-10-1-14-3z" fill="#f8f8f8"/></svg><nav-link>Login</nav-link></div><nav-link>About ...</nav-link></div>`);

define('tool-button',el=>`<style>:host{display:block;position:relative;width:90px;height:90px;color:#0b151c}:host([active]){color:#e9a440}
:host([active])::before{content:"";position:absolute;left:10px;top:8px;width:66px;height:70px;border:2px solid #d4d4d4;border-top:3px solid #8e8e8e;border-bottom:0;border-radius:3px;mask-image:linear-gradient(#000 95%,transparent)}svg{display:block;position:relative}</style>
<svg width="90" height="90" viewBox="${el.getAttribute('box')}" preserveAspectRatio="none" fill="currentColor" stroke="none">${ICONS[el.getAttribute('icon')]}</svg>`);

const tri=(x)=>`<path d="M${x} 115L${x+18} 155H${x-18}Z"/>`;
const gear=(()=>{let d='';for(let i=0;i<12;i++){const a=i*Math.PI/6,p=(r,o)=>`${(1123+r*Math.cos(a+o)*.87).toFixed(1)} ${(199+r*Math.sin(a+o)).toFixed(1)}`;d+=`M${p(34,-.2)}L${p(50,-.09)}L${p(53,0)}L${p(50,.09)}L${p(34,.2)}Z`;}return d;})();
const ICONS={
 orbit:`<g fill="none" stroke="currentColor" stroke-width="10"><path d="M170 135V196L176 203" stroke-linecap="butt"/><path d="M170 242V264"/><path d="M131 209C106 196 115 176 160 175M182 175C240 180 242 218 180 221C160 222 150 220 142 218M157 202L138 218 158 240"/></g>${tri(239)}`,
 pan:`<path d="M354 194q8-8 17 2l11 12q4 2 4-4L379 154q1-9 9-4l9 38h4L401 143q4-9 9 0l3 44h4L422 147q5-7 9 2l-3 41h4L436 168q5-7 9 1l-4 58q-2 24-15 29-18 6-34-2-12-8-18-28z"/>`,
 zoom:`<path d="M641 143L669 160 663 168 646 158 648 225 671 205 678 212 641 247 604 212 611 205 634 225 637 158 619 168 613 160Z"/>`,
 walk:`<ellipse cx="875" cy="150" rx="9" ry="10"/><path d="M864 167H886q6 2 8 10l12 35-5 4-11-18V260q-5 8-11 0V217h-6v43q-6 8-12 0V198l-10 18-6-4 13-36q3-8 9-9z"/>`,
 camera:`<path fill-rule="evenodd" d="M1059 167H1115q10 4 10 15v50q-1 5-5 5h-61q-6 0-6-6V173q0-6 6-6zM1063 177v18h20v-18z"/><path d="M1129 183h4v39h-4zM1138 184h5L1158 166v72L1143 221h-5z"/>${tri(1178)}`,
 section:`<path d="M1372 156L1400 144 1436 163V182L1408 198 1404 175ZM1407 211L1435 199V214L1407 230Z"/><path fill-rule="evenodd" d="M1345 154L1403 182V259L1345 230ZM1350 164V226L1397 250V188ZM1357 177L1390 193V236L1357 219ZM1364 188V216L1387 227V218L1376 212V202L1387 207V199Z"/>${tri(1461)}`,
 measure:`<path fill-rule="evenodd" d="M180 131L201 157 111 261 89 235 98 224 107 233 111 229 103 219 109 212 117 221 121 217 113 207 120 199 131 210 135 206 123 195 131 186 139 195 143 190 136 181 143 173 155 185 159 180 148 168 155 160 163 168 166 164 160 154 167 146 176 158 180 153 172 141ZM183 148a4 5 0 1 0 .1 0z"/>`,
 explode:`<path d="M336 161L372 139 409 161 372 183ZM316 194L354 213V258L316 237ZM391 213L429 194V237L391 258Z"/>`,
 tree:`<path d="M632 134H674V183H655V199H693V220H707V258H674V220H690V204H617V220H631V258H598V220H613V199H652V183H632Z"/>`,
 props:`<path fill-rule="evenodd" d="M852 139H928V259H852ZM856 144V198H924V144ZM857 216V220H876V224H885V220H923V216H885V210H876V216ZM857 238V242H894V248H903V242H923V238H903V231H894V238Z"/><ellipse cx="890" cy="172" rx="14.500" ry="17"/>`,
 gear:`<path d="${gear}"/><ellipse cx="1123" cy="199" rx="27" ry="32" fill="none" stroke="currentColor" stroke-width="14"/>`,
 full:`<path fill-rule="evenodd" d="M1317 150H1402V249H1317ZM1321 199V245H1360V211L1390 178V196H1398V156H1365V166H1380L1352 199Z"/>`
};

define('tool-group',`<style>:host{display:flex;height:90px;background:#fff;border-radius:9px;box-shadow:2px 6px 22px rgba(0,0,0,.5)}</style><slot></slot>`);

define('forge-viewer',`<style>:host{display:block;position:relative;width:2204px;overflow:hidden;background:#ececec}
svg.scene{display:block}.bar{position:absolute;left:540px;top:1562px;display:flex;gap:18px}</style>
<svg class="scene" width="2204" height="1674" viewBox="0 120 2204 1674"></svg>
<div class="bar">
<tool-group><tool-button active icon="orbit" box="52 66 235.200 270"></tool-button><tool-button icon="pan" box="287.200 66 235.200 270"></tool-button><tool-button icon="zoom" box="522.400 66 235.200 270"></tool-button><tool-button icon="walk" box="757.600 66 235.200 270"></tool-button><tool-button icon="camera" box="992.800 66 235.200 270"></tool-button></tool-group>
<tool-group><tool-button icon="section" box="1275 66 235.200 270"></tool-button><tool-button icon="measure" box="20.900 66 235.200 270"></tool-button><tool-button icon="explode" box="256.100 66 235.200 270"></tool-button></tool-group>
<tool-group><tool-button icon="tree" box="538 66 235.200 270"></tool-button><tool-button icon="props" box="773.200 66 235.200 270"></tool-button><tool-button icon="gear" box="1008.400 66 235.200 270"></tool-button><tool-button icon="full" box="1243.600 66 235.200 270"></tool-button></tool-group>
</div>`,el=>{
  el.shadowRoot.querySelector('.scene').innerHTML=ground()
   +G(480,600,.76531,.57398,shell())
   +G(480,600,.33333,.33333,leftWing())
   +G(480,600,.33333,.33333,core())
   +G(900,600,.35077,.33333,eastWing())
   +G(700,850,.33333,.33333,southWing())
   +G(480,600,.33333,.33333,leftFacade())
   +G(700,850,.33333,.33333,southFacade())
   +G(480,600,.76531,.57398,roof())
   +G(1860,120,.33333,.33333,cube());
});

define('icon-button',el=>`<style>:host{display:block;box-sizing:border-box;width:46px;height:44px;border:2px solid #c6c6c6;border-radius:10px;background:#e1e1e1}svg{display:block}</style>
<svg width="42" height="40" viewBox="2 2 42 40" fill="none" stroke="#999" stroke-width="2">${{
 lock:'<rect x="9" y="19" width="17" height="11" rx="1.500" fill="#999" stroke="none"/><path d="M21.500 19V16.500a5 5 0 0 1 10 0V21" stroke-width="3.200"/>',
 minus:'<rect x="12" y="11" width="18" height="18" rx="3.500"/><path d="M14.500 20H27.500"/>',
 plus:'<rect x="12" y="11" width="18" height="18" rx="3.500"/><path d="M14.500 20H27.500M21 14V26"/>',
 brush:'<g fill="#999" stroke="none"><path d="M34 9c2 1 1 5-1 9-2 4-5 7-7 7-3 0-5-2-4-4 2-5 7-10 12-12z"/><path d="M16 23c4-2 8 1 8 4 0 5-4 7-8 7-4 0-7-3-7-7 2 1 4 0 4-1 0-1 1-3 3-3z"/></g>'
}[el.getAttribute('icon')]}</svg>`);

define('dock-panel',`<style>:host{display:flex;flex-direction:column;background:#fdfdfd}
.h{display:flex;align-items:flex-start;box-sizing:border-box;height:72px;background:#f4f4f4;border-bottom:2px solid #cbcbcb;padding-right:18px}
.b{display:flex;gap:8px;margin:14px 0 0 auto}.c{flex:1;display:flex;flex-direction:column}</style>
<div class="h"><slot name="title"></slot><div class="b"><icon-button icon="lock"></icon-button><icon-button icon="minus"></icon-button><icon-button icon="plus"></icon-button></div></div><div class="c"><slot></slot></div>`);

define('level-row',el=>`<style>:host{display:flex;align-items:center;box-sizing:border-box;height:60.4px;flex:none;border:2px solid #b4b4b4;background:#f4f4f4;padding-left:4px;gap:11px}
:host([selected]){border-color:#58aee0;background:#e6edfb}i{box-sizing:border-box;width:50px;height:50px;border-radius:50%;border:4px solid ${el.getAttribute('ring')};background:${el.getAttribute('fill')}}span{padding-bottom:6px;letter-spacing:-.2px}</style><i></i><span><slot></slot></span>`);

define('level-list',`<style>:host{display:flex;flex-direction:column;gap:8px;padding:12px 10px 0}</style>`,el=>{
 [[15,'#3780d2','#b9d0ee'],[14,'#3f8dcd','#bbd5ea'],[13,'#499fc8','#bfdae6'],[12,'#53aec1','#c2dfe4'],[11,'#5bbcba','#c5e5e2'],[10,'#57a0b3','#b8d5e2'],[9,'#5380b2','#c2cfe0'],[8,'#6e5bad','#cdc5e1'],[7,'#8d41a4','#d5bedd'],[6,'#aa359c','#dfb9da'],[5,'#b94389','#e4bed5']].forEach(([n,r,f])=>{
  const e=document.createElement('level-row');e.setAttribute('ring',r);e.setAttribute('fill',f);if(n===10)e.setAttribute('selected','');e.textContent='Level '+n;el.shadowRoot.appendChild(e);});
});

define('property-select',`<style>:host{display:flex;align-items:flex-start;gap:7px;margin-left:190px}
.d{box-sizing:border-box;width:289px;height:48px;margin-top:10px;border:2px solid #ccc;border-radius:8px;background:#fff;display:flex;align-items:center;padding:0 0 2px 22px;gap:8px;letter-spacing:.28px;white-space:nowrap}
.d b{border:7px solid transparent;border-top:8px solid #777;border-bottom:0;margin-top:5px}icon-button{margin-top:14px;width:48px}</style>
<div class="d"><slot></slot><b></b></div><icon-button icon="brush"></icon-button>`);

define('donut-chart',`<style>:host{display:block}svg{display:block}</style><svg width="1190" height="760" viewBox="2212 1034 1190 760"></svg>`,el=>{
 const cx=2807.2,cy=1415.6,R=343.8,r=132.6,pt=(q,a)=>{a*=Math.PI/180;return (cx+q*Math.cos(a)).toFixed(2)+' '+(cy+q*Math.sin(a)).toFixed(2)};
 let a0=0,s='';
 [[59.9,'#4897d5','16%',1232,1055],[104.1,'#e49d6b','12%',862,1303],[138.8,'#5c99b6','9%',522,1233],[172.5,'#f2bd62','9%',326,1010],[204.6,'#8958a6','8%',288,729],[233.9,'#be4492','8%',396,483],[263.1,'#3e87da','8%',601,332],[286.1,'#6d75ac','6%',827,298],[308.5,'#a63c9f','6%',1018,354],[321.3,'#58b4c3','3%',1142,445],[333.2,'#5bbbbd','3%',1210,530],[342.8,'#d67c74','2%',1253,612],[351.8,'#51a5cb','2%',1277,690],[360,'#c95d83','2%',1288,765]].forEach(([a1,c,t,x,y])=>{
  s+=`<path d="M${pt(R,a0)}A${R} ${R} 0 0 1 ${pt(R,a1)}L${pt(r,a1)}A${r} ${r} 0 0 0 ${pt(r,a0)}Z" fill="${c}" stroke="${c}" stroke-width=".8"/>`;
  s+=`<text x="${(2440+x/2.119).toFixed(1)}" y="${(1040+y/2.119+5.6).toFixed(1)}">${t}</text>`;a0=a1;});
 el.shadowRoot.querySelector('svg').innerHTML=`<g text-anchor="middle" font-family="Noto Sans,Open Sans,sans-serif" font-size="18" font-weight="500" fill="#fff">${s.replace(/<text.*?<\/text>/g,'')}${s.match(/<text.*?<\/text>/g).join('')}</g>`;
});

define('forge-app',`<style>:host{display:flex;flex-direction:column;width:3402px;height:1794px}.m{display:flex;height:1674px}
.v{box-sizing:border-box;width:8px;border:solid #c4c4c4;border-width:0 2px;background:#ececec}.s{display:flex;flex-direction:column;width:1190px}
.p1{height:836px}.p2{height:832px}.x{box-sizing:border-box;height:6px;border:solid #c6c6c6;border-width:2px 0;background:#ececec}.t{margin:20px 0 0 48px;line-height:31px;letter-spacing:.35px}</style>
<forge-navbar></forge-navbar><div class="m"><forge-viewer></forge-viewer><div class="v"></div><div class="s">
<dock-panel class="p1"><div slot="title" class="t">Level Filter</div><level-list></level-list></dock-panel><div class="x"></div>
<dock-panel class="p2"><property-select slot="title">Property: Category</property-select><donut-chart></donut-chart></dock-panel></div></div>`);
</script>
</body>
</html>
